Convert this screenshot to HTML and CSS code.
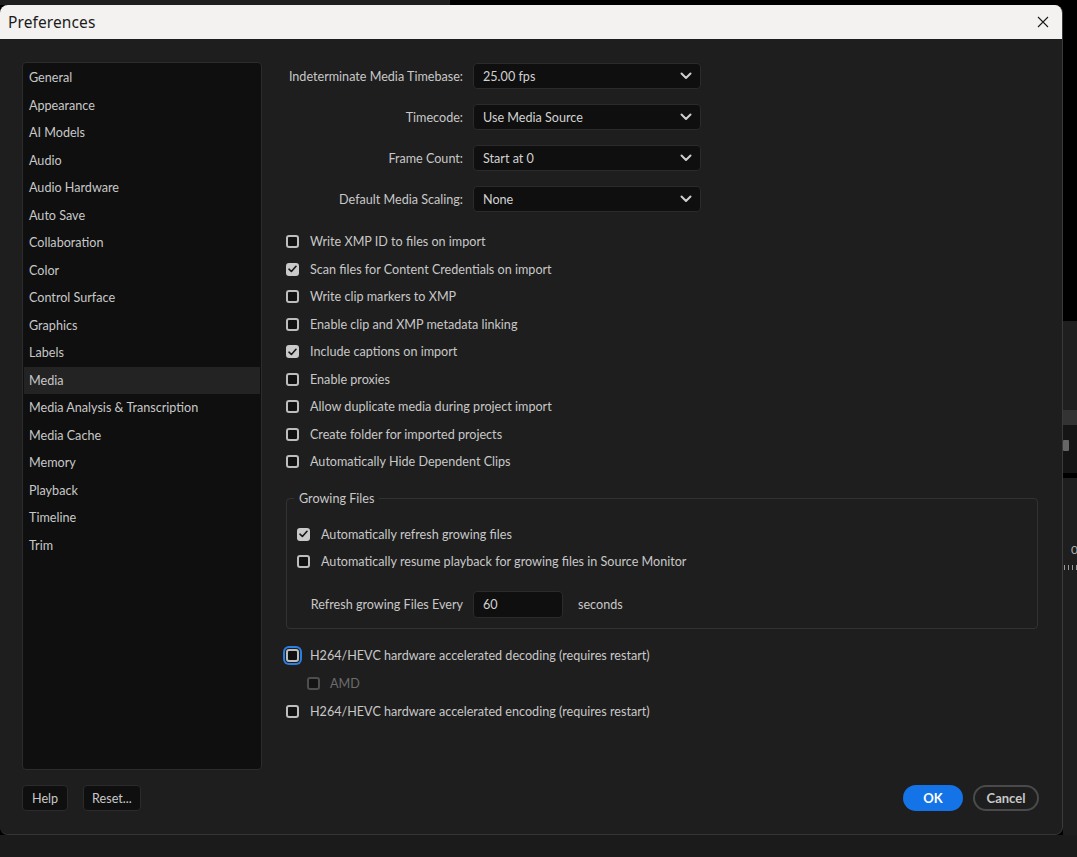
FILE: index.html
```html
<!DOCTYPE html>
<html>
<head>
<meta charset="utf-8">
<link rel="stylesheet" href="styles.css">
</head>
<body>
<div class="screen">
  <div class="topstrip"><div class="ts-left"></div><div class="ts-right"></div></div>
  <div class="middle">
    <div class="window">
      <div class="titlebar">
        <span class="title">Preferences</span>
        <svg class="close" width="12" height="12" viewBox="0 0 12 12"><path d="M1 1 L11 11 M11 1 L1 11" stroke="#1b1b1b" stroke-width="1.1" fill="none"/></svg>
      </div>
      <div class="dialog-body">
        <div class="main">
          <nav class="sidebar">
            <div class="nav-item">General</div>
            <div class="nav-item">Appearance</div>
            <div class="nav-item">AI Models</div>
            <div class="nav-item">Audio</div>
            <div class="nav-item">Audio Hardware</div>
            <div class="nav-item">Auto Save</div>
            <div class="nav-item">Collaboration</div>
            <div class="nav-item">Color</div>
            <div class="nav-item">Control Surface</div>
            <div class="nav-item">Graphics</div>
            <div class="nav-item">Labels</div>
            <div class="nav-item selected">Media</div>
            <div class="nav-item">Media Analysis &amp; Transcription</div>
            <div class="nav-item">Media Cache</div>
            <div class="nav-item">Memory</div>
            <div class="nav-item">Playback</div>
            <div class="nav-item">Timeline</div>
            <div class="nav-item">Trim</div>
          </nav>
          <div class="content">
            <div class="form-grid">
              <label class="field-label">Indeterminate Media Timebase:</label>
              <div class="select"><span>25.00 fps</span><svg class="chev" width="12" height="8" viewBox="0 0 12 8"><path d="M1.5 1.5 L6 6 L10.5 1.5" stroke="#cfcfcf" stroke-width="2" fill="none" stroke-linecap="round" stroke-linejoin="round"/></svg></div>
              <label class="field-label">Timecode:</label>
              <div class="select"><span>Use Media Source</span><svg class="chev" width="12" height="8" viewBox="0 0 12 8"><path d="M1.5 1.5 L6 6 L10.5 1.5" stroke="#cfcfcf" stroke-width="2" fill="none" stroke-linecap="round" stroke-linejoin="round"/></svg></div>
              <label class="field-label">Frame Count:</label>
              <div class="select"><span>Start at 0</span><svg class="chev" width="12" height="8" viewBox="0 0 12 8"><path d="M1.5 1.5 L6 6 L10.5 1.5" stroke="#cfcfcf" stroke-width="2" fill="none" stroke-linecap="round" stroke-linejoin="round"/></svg></div>
              <label class="field-label">Default Media Scaling:</label>
              <div class="select"><span>None</span><svg class="chev" width="12" height="8" viewBox="0 0 12 8"><path d="M1.5 1.5 L6 6 L10.5 1.5" stroke="#cfcfcf" stroke-width="2" fill="none" stroke-linecap="round" stroke-linejoin="round"/></svg></div>
            </div>

            <div class="checks">
              <div class="check-row"><span class="box"></span><span>Write XMP ID to files on import</span></div>
              <div class="check-row"><span class="box checked"><svg width="9" height="8" viewBox="0 0 9 8"><path d="M1 4.2 L3.4 6.5 L8 1.3" stroke="#161616" stroke-width="1.6" fill="none" stroke-linecap="round" stroke-linejoin="round"/></svg></span><span>Scan files for Content Credentials on import</span></div>
              <div class="check-row"><span class="box"></span><span>Write clip markers to XMP</span></div>
              <div class="check-row"><span class="box"></span><span>Enable clip and XMP metadata linking</span></div>
              <div class="check-row"><span class="box checked"><svg width="9" height="8" viewBox="0 0 9 8"><path d="M1 4.2 L3.4 6.5 L8 1.3" stroke="#161616" stroke-width="1.6" fill="none" stroke-linecap="round" stroke-linejoin="round"/></svg></span><span>Include captions on import</span></div>
              <div class="check-row"><span class="box"></span><span>Enable proxies</span></div>
              <div class="check-row"><span class="box"></span><span>Allow duplicate media during project import</span></div>
              <div class="check-row"><span class="box"></span><span>Create folder for imported projects</span></div>
              <div class="check-row"><span class="box"></span><span>Automatically Hide Dependent Clips</span></div>
            </div>

            <fieldset class="group">
              <legend>Growing Files</legend>
              <div class="check-row"><span class="box checked"><svg width="9" height="8" viewBox="0 0 9 8"><path d="M1 4.2 L3.4 6.5 L8 1.3" stroke="#161616" stroke-width="1.6" fill="none" stroke-linecap="round" stroke-linejoin="round"/></svg></span><span>Automatically refresh growing files</span></div>
              <div class="check-row"><span class="box"></span><span>Automatically resume playback for growing files in Source Monitor</span></div>
              <div class="refresh-row">
                <label class="field-label">Refresh growing Files Every</label>
                <div class="num-input">60</div>
                <span class="unit">seconds</span>
              </div>
            </fieldset>

            <div class="checks hw">
              <div class="check-row"><span class="box focused"></span><span>H264/HEVC hardware accelerated decoding (requires restart)</span></div>
              <div class="check-row sub disabled"><span class="box"></span><span>AMD</span></div>
              <div class="check-row"><span class="box"></span><span>H264/HEVC hardware accelerated encoding (requires restart)</span></div>
            </div>
          </div>
        </div>
        <div class="footer">
          <div class="left-buttons">
            <button class="btn">Help</button>
            <button class="btn">Reset...</button>
          </div>
          <div class="right-buttons">
            <button class="btn-ok">OK</button>
            <button class="btn-cancel">Cancel</button>
          </div>
        </div>
      </div>
    </div>
    <div class="sidestrip">
      <div class="ss-black"></div>
      <div class="ss-panel"></div>
      <div class="ss-band"></div>
      <div class="ss-dark"><span class="ss-icon"></span></div>
      <div class="ss-sep"></div>
      <div class="ss-rest">
        <span class="ss-zero">0</span>
        <span class="ss-ticks"></span>
      </div>
    </div>
  </div>
  <div class="bottomstrip"></div>
</div>
</body>
</html>
```

FILE: styles.css
```css
* { box-sizing: border-box; }
html, body { margin: 0; padding: 0; }
body {
  background: #1c1c1c;
  font-family: Lato, "Open Sans", sans-serif;
  font-size: 12.6px;
  color: #c8c8c8;
  width: 1077px;
  height: 857px;
  overflow: hidden;
}
.screen { width: 1077px; height: 857px; display: flex; flex-direction: column; }
.topstrip { height: 5px; display: flex; }
.ts-left { width: 450px; background: #1f1f1f; }
.ts-right { flex: 1; background: #000; }
.middle { height: 830px; display: flex; background: #000; }
.window {
  width: 1063px;
  height: 830px;
  display: flex;
  flex-direction: column;
  border-radius: 8px 8px 8px 8px;
  overflow: hidden;
  background: #1e1e1e;
  border-right: 1px solid #3a3a3a;
  border-bottom: 1px solid #353535;
}
.titlebar {
  height: 34px;
  background: #f3f2f1;
  display: flex;
  align-items: center;
  justify-content: space-between;
  padding: 0 13px 0 8px;
  flex-shrink: 0;
}
.title {
  font-family: "Noto Sans", "Open Sans", sans-serif;
  font-size: 15.5px;
  color: #1b1b1b;
  letter-spacing: 0.1px;
}
.close { display: block; }
.dialog-body {
  flex: 1;
  display: flex;
  flex-direction: column;
  padding: 23px 23px 0 22px;
}
.main { display: flex; gap: 24px; height: 708px; }
.sidebar {
  width: 240px;
  flex-shrink: 0;
  background: #0f0f0f;
  border: 1px solid #2c2c2c;
  border-radius: 4px;
  padding: 1px 1px;
}
.nav-item {
  height: 27.5px;
  line-height: 27.5px;
  padding-left: 5px;
  white-space: nowrap;
  color: #c8c8c8;
}
.nav-item.selected { background: #232323; }
.content { flex: 1; padding-top: 1px; }
.form-grid {
  display: grid;
  grid-template-columns: 177px 228px;
  column-gap: 10px;
  row-gap: 15px;
  align-items: center;
}
.field-label { text-align: right; white-space: nowrap; color: #c8c8c8; }
.select {
  height: 26px;
  background: #0f0f0f;
  border: 1px solid #2b2b2b;
  border-radius: 4px;
  display: flex;
  align-items: center;
  justify-content: space-between;
  padding: 0 8px 0 9px;
  color: #d2d2d2;
}
.chev { display: block; }
.checks { margin-top: 16px; }
.check-row {
  height: 27.5px;
  display: flex;
  align-items: center;
  white-space: nowrap;
}
.box {
  width: 13px;
  height: 13px;
  border: 2px solid #bdbdbd;
  border-radius: 3px;
  background: #111;
  margin-right: 11px;
  flex-shrink: 0;
  display: flex;
  align-items: center;
  justify-content: center;
}
.box.checked { background: #c9c9c9; border-color: #c9c9c9; }
.box.focused { box-shadow: 0 0 0 1px #1e1e1e, 0 0 0 3px #2a7fe3; }
.group {
  margin: 14px 0 0 0;
  width: 752px;
  border: 1px solid #323232;
  border-radius: 4px;
  padding: 13px 10px 10px 10px;
}
.group legend {
  margin-left: -3px;
  padding: 0 5px;
  line-height: 18px;
  color: #c8c8c8;
}
.group .check-row + .check-row { margin-top: -0.5px; }
.refresh-row {
  margin-top: 16px;
  display: grid;
  grid-template-columns: 166px 90px auto;
  column-gap: 10px;
  align-items: center;
}
.num-input {
  height: 27px;
  background: #0f0f0f;
  border: 1px solid #2b2b2b;
  border-radius: 4px;
  padding-left: 9px;
  line-height: 25px;
  color: #d2d2d2;
}
.unit { margin-left: 5px; }
.hw { margin-top: 13px; }
.check-row.sub { padding-left: 21px; margin-top: 0.5px; }
.check-row.disabled { color: #6c6c6c; }
.check-row.disabled .box { border-color: #4e4e4e; background: #141414; margin-right: 10px; }
.footer {
  display: flex;
  justify-content: space-between;
  margin-top: 15px;
  height: 26px;
}
.left-buttons, .right-buttons { display: flex; gap: 15px; }
.right-buttons { gap: 10px; }
button { font-family: inherit; font-size: 12.6px; cursor: default; }
.btn {
  height: 26px;
  background: #0f0f0f;
  border: 1px solid #2b2b2b;
  border-radius: 4px;
  color: #c8c8c8;
  padding: 0 9px;
}
.btn + .btn { padding: 0 8px; }
.btn-ok {
  width: 60px;
  height: 26px;
  background: #1473e6;
  color: #fff;
  border: none;
  border-radius: 13px;
  font-weight: 700;
  font-size: 13px;
}
.btn-cancel {
  width: 66px;
  height: 26px;
  background: transparent;
  color: #c8c8c8;
  border: 2px solid #4a4a4a;
  border-radius: 13px;
  font-weight: 700;
  font-size: 13px;
}
.sidestrip { flex: 1; display: flex; flex-direction: column; background: #1e1e1e; }
.ss-black { height: 316px; background: #000; }
.ss-panel { height: 89px; background: #1f1f1f; }
.ss-band { height: 15px; background: #333; }
.ss-dark { height: 48px; background: #151515; position: relative; }
.ss-icon { position: absolute; left: 0; top: 15px; width: 6px; height: 11px; background: #666; border-radius: 1px; }
.ss-sep { height: 5px; background: #000; }
.ss-rest { flex: 1; background: #1e1e1e; position: relative; }
.ss-zero { position: absolute; left: 8px; top: 64px; font-size: 12px; color: #b0b0b0; }
.ss-ticks { position: absolute; left: 1px; top: 87px; width: 14px; height: 5px;
  background: repeating-linear-gradient(90deg, #999 0 1px, transparent 1px 4px); }
.bottomstrip { height: 22px; background: #1b1b1b; }
```
